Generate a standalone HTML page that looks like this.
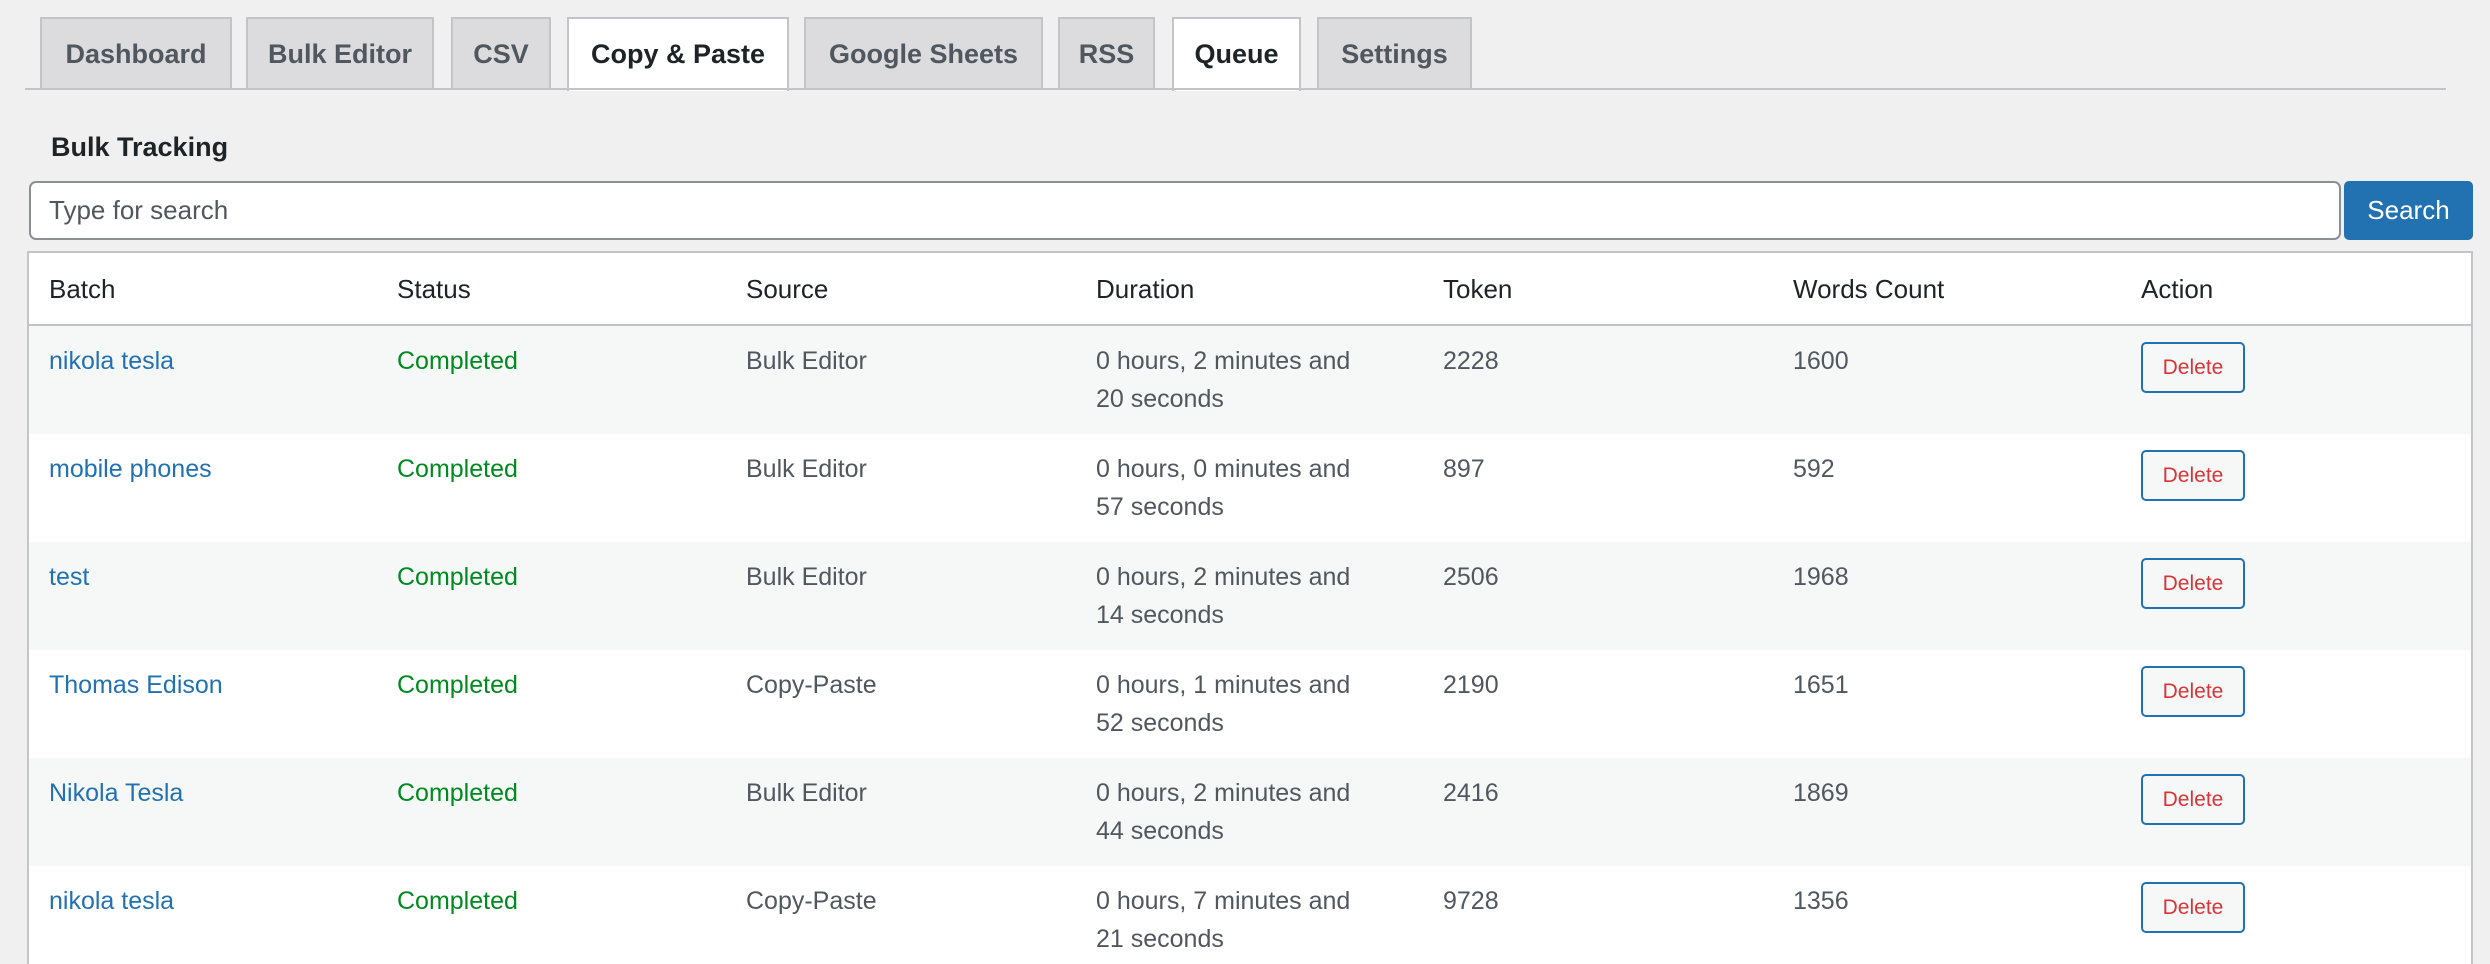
<!DOCTYPE html>
<html style="height:964px;overflow:hidden"><head><meta charset="utf-8"><style>
*{box-sizing:border-box;margin:0;padding:0}
body{width:2490px;height:964px;overflow:hidden;background:#f0f0f1;font-family:"Liberation Sans",Arial,sans-serif;position:relative}
.tab{position:absolute;top:17px;height:72px;background:#dcdcde;border:2px solid #c3c4c7;border-bottom:none;color:#50575e;font-weight:bold;font-size:27px;line-height:70px;text-align:center}
.tab.on{background:#fff;color:#1d2327;height:74px}
.line{position:absolute;left:25px;right:44px;top:88px;height:2px;background:#c3c4c7}
h2{position:absolute;left:51px;top:132px;font-size:27px;color:#1d2327;font-weight:bold}
.inp{position:absolute;left:29px;top:181px;width:2312px;height:59px;border:2px solid #8c8f94;border-radius:7px;background:#fff;font-size:26px;color:#50575e;line-height:55px;padding-left:18px}
.btn{position:absolute;left:2344px;top:181px;width:129px;height:59px;background:#2271b1;border-radius:5px;color:#fff;font-size:26px;line-height:59px;text-align:center}
.tbl{position:absolute;left:27px;top:251px;width:2446px;height:713px;border:2px solid #c3c4c7;border-bottom:none;background:#fff;overflow:hidden}
.hd{position:absolute;left:0;top:0;width:100%;height:73px;border-bottom:2px solid #c3c4c7}
.row{position:absolute;left:0;width:100%;height:108px}
.c{position:absolute;font-size:25px;line-height:38px;color:#50575e}
.hd .c{color:#1d2327;font-size:26px;top:17px}
.row .c{top:16px}
a{color:#2271b1;text-decoration:none}
.g{color:#008a20}
.del{position:absolute;top:16px;left:2112px;width:104px;height:51px;border:2px solid #2271b1;border-radius:5px;background:#f6f7f7;color:#d63638;font-size:21px;line-height:47px;text-align:center}
</style></head><body>
<div class="tab" style="left:40px;width:192px">Dashboard</div>
<div class="tab" style="left:246px;width:188px">Bulk Editor</div>
<div class="tab" style="left:451px;width:100px">CSV</div>
<div class="tab on" style="left:567px;width:222px">Copy &amp; Paste</div>
<div class="tab" style="left:804px;width:239px">Google Sheets</div>
<div class="tab" style="left:1058px;width:97px">RSS</div>
<div class="tab on" style="left:1172px;width:129px">Queue</div>
<div class="tab" style="left:1317px;width:155px">Settings</div>
<div class="line"></div>
<h2>Bulk Tracking</h2>
<div class="inp">Type for search</div>
<div class="btn">Search</div>
<div class="tbl">
<div class="hd">
<div class="c" style="left:20px">Batch</div><div class="c" style="left:368px">Status</div><div class="c" style="left:717px">Source</div><div class="c" style="left:1067px">Duration</div><div class="c" style="left:1414px">Token</div><div class="c" style="left:1764px">Words Count</div><div class="c" style="left:2112px">Action</div>
</div>
<div class="row" style="top:73px;background:#f6f7f7"><div class="c" style="left:20px"><a>nikola tesla</a></div><div class="c g" style="left:368px">Completed</div><div class="c" style="left:717px">Bulk Editor</div><div class="c" style="left:1067px">0 hours, 2 minutes and<br>20 seconds</div><div class="c" style="left:1414px">2228</div><div class="c" style="left:1764px">1600</div><div class="del">Delete</div></div>
<div class="row" style="top:181px;background:#fff"><div class="c" style="left:20px"><a>mobile phones</a></div><div class="c g" style="left:368px">Completed</div><div class="c" style="left:717px">Bulk Editor</div><div class="c" style="left:1067px">0 hours, 0 minutes and<br>57 seconds</div><div class="c" style="left:1414px">897</div><div class="c" style="left:1764px">592</div><div class="del">Delete</div></div>
<div class="row" style="top:289px;background:#f6f7f7"><div class="c" style="left:20px"><a>test</a></div><div class="c g" style="left:368px">Completed</div><div class="c" style="left:717px">Bulk Editor</div><div class="c" style="left:1067px">0 hours, 2 minutes and<br>14 seconds</div><div class="c" style="left:1414px">2506</div><div class="c" style="left:1764px">1968</div><div class="del">Delete</div></div>
<div class="row" style="top:397px;background:#fff"><div class="c" style="left:20px"><a>Thomas Edison</a></div><div class="c g" style="left:368px">Completed</div><div class="c" style="left:717px">Copy-Paste</div><div class="c" style="left:1067px">0 hours, 1 minutes and<br>52 seconds</div><div class="c" style="left:1414px">2190</div><div class="c" style="left:1764px">1651</div><div class="del">Delete</div></div>
<div class="row" style="top:505px;background:#f6f7f7"><div class="c" style="left:20px"><a>Nikola Tesla</a></div><div class="c g" style="left:368px">Completed</div><div class="c" style="left:717px">Bulk Editor</div><div class="c" style="left:1067px">0 hours, 2 minutes and<br>44 seconds</div><div class="c" style="left:1414px">2416</div><div class="c" style="left:1764px">1869</div><div class="del">Delete</div></div>
<div class="row" style="top:613px;background:#fff"><div class="c" style="left:20px"><a>nikola tesla</a></div><div class="c g" style="left:368px">Completed</div><div class="c" style="left:717px">Copy-Paste</div><div class="c" style="left:1067px">0 hours, 7 minutes and<br>21 seconds</div><div class="c" style="left:1414px">9728</div><div class="c" style="left:1764px">1356</div><div class="del">Delete</div></div>
</div>
</body></html>
